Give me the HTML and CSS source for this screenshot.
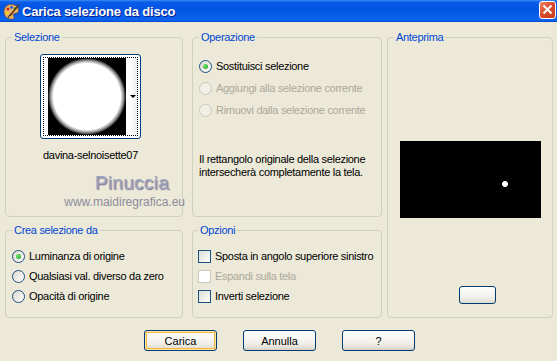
FILE: index.html
```html
<!DOCTYPE html>
<html>
<head>
  <title>Carica selezione da disco</title>
  <link rel="stylesheet" href="styles.css">
</head>
<body>
  <div class="window">
    <div class="titlebar">
      <svg class="app-icon" width="17" height="17" viewBox="0 0 17 17">
        <path d="M8 1.5c4.2 0 7.5 2.4 7.5 5.6 0 2.3-1.8 3.3-3.4 3.3-1.3 0-2 .6-2 1.6 0 1.2.9 1.5.9 2.5 0 1-1 1.6-2.6 1.6C4.3 16.1 1 13 1 8.6 1 4.6 4.2 1.5 8 1.5z" fill="#e8b46a" stroke="#8a5420" stroke-width=".8"/>
        <circle cx="5" cy="6" r="1.5" fill="#d42020"/>
        <circle cx="8.6" cy="4.4" r="1.4" fill="#2050e0"/>
        <circle cx="12" cy="5.6" r="1.3" fill="#20a030"/>
        <circle cx="4.2" cy="10" r="1.4" fill="#f0d020"/>
        <path d="M15.5 2.2L7 12.5" stroke="#5a3210" stroke-width="1.6" stroke-linecap="round"/>
        <path d="M7.4 12L5.6 14.8 4.6 15.6 5.2 13.4 6.6 11.4z" fill="#303030"/>
      </svg>
      <span class="title">Carica selezione da disco</span>
      <div class="close">
        <svg width="11" height="11" viewBox="0 0 11 11">
          <path d="M1.5 1.5L9.5 9.5M9.5 1.5L1.5 9.5" stroke="#fff" stroke-width="2"/>
        </svg>
      </div>
    </div>

    <div class="content">
      <div class="groups">
        <fieldset class="group sel">
          <legend>Selezione</legend>
          <div class="sel-body">
            <div class="thumb">
              <div class="thumb-focus">
                <div class="thumb-img"></div>
                <div class="thumb-strip"><span class="arrow"></span></div>
              </div>
            </div>
            <div class="thumb-name">davina-selnoisette07</div>
            <div class="wm-name">Pinuccia</div>
            <div class="wm-url">www.maidiregrafica.eu</div>
          </div>
        </fieldset>

        <fieldset class="group op">
          <legend>Operazione</legend>
          <div class="op-body">
            <div class="row"><span class="radio checked"></span>Sostituisci selezione</div>
            <div class="row disabled"><span class="radio"></span>Aggiungi alla selezione corrente</div>
            <div class="row disabled"><span class="radio"></span>Rimuovi dalla selezione corrente</div>
            <p class="desc">Il rettangolo originale della selezione<br>intersecherà completamente la tela.</p>
          </div>
        </fieldset>

        <fieldset class="group prev">
          <legend>Anteprima</legend>
          <div class="prev-body">
            <div class="prev-img"></div>
            <div class="prev-btn"></div>
          </div>
        </fieldset>

        <fieldset class="group crea">
          <legend>Crea selezione da</legend>
          <div class="small-body">
            <div class="row short"><span class="radio checked"></span>Luminanza di origine</div>
            <div class="row short"><span class="radio"></span>Qualsiasi val. diverso da zero</div>
            <div class="row short"><span class="radio"></span>Opacità di origine</div>
          </div>
        </fieldset>

        <fieldset class="group opz">
          <legend>Opzioni</legend>
          <div class="small-body">
            <div class="row short"><span class="check"></span>Sposta in angolo superiore sinistro</div>
            <div class="row short disabled"><span class="check"></span>Espandi sulla tela</div>
            <div class="row short"><span class="check"></span>Inverti selezione</div>
          </div>
        </fieldset>
      </div>
    </div>

    <div class="buttons">
      <button class="btn default">Carica</button>
      <button class="btn">Annulla</button>
      <button class="btn">?</button>
    </div>
  </div>
</body>
</html>
```

FILE: styles.css
```css
body {
  margin: 0;
  font-family: "Liberation Sans", Arial, sans-serif;
  font-size: 11px;
  letter-spacing: -0.3px;
  background-color: #ece9d8;
}
.window {
  width: 557px;
  height: 361px;
  background-color: #ece9d8;
  overflow: hidden;
  white-space: nowrap;
}
.titlebar {
  height: 22px;
  display: flex;
  align-items: center;
  padding-left: 3px;
  background: linear-gradient(#3a8cf8 0, #0a5ce9 2px, #0055e3 45%, #0a62ee 85%, #0860ec 93%, #003fc6 100%);
}
.app-icon {
  margin-right: 2px;
}
.title {
  flex: 1;
  color: #fff;
  font-weight: bold;
  font-size: 13px;
  letter-spacing: -0.2px;
  text-shadow: 1px 1px 0 #0a1e8c;
}
.close {
  width: 15px;
  height: 16px;
  margin: 0 1px 3px 0;
  border: 1px solid #fff;
  border-radius: 3px;
  background: linear-gradient(135deg, #ec8a6c, #dc4c2c 45%, #c83a1a);
  display: flex;
  align-items: center;
  justify-content: center;
}

.content {
  padding: 9px 4px 0 5px;
}
.groups {
  display: grid;
  grid-template-columns: 187px 195px 166px;
  grid-template-rows: 186px 94px;
  row-gap: 7px;
}
.group {
  margin: 0;
  padding: 0 6px;
  min-width: 0;
  border: 1px solid #d0d0bf;
  border-radius: 4px;
}
.group legend {
  padding: 0 2px;
  line-height: 13px;
  color: #0046d5;
}
.sel {
  grid-column: 1;
  grid-row: 1;
  width: 178px;
  box-sizing: border-box;
}
.op {
  grid-column: 2;
  grid-row: 1;
  width: 190px;
  box-sizing: border-box;
}
.prev {
  grid-column: 3;
  grid-row: 1 / 3;
}
.crea {
  grid-column: 1;
  grid-row: 2;
  width: 178px;
  box-sizing: border-box;
}
.opz {
  grid-column: 2;
  grid-row: 2;
  width: 190px;
  box-sizing: border-box;
  padding-left: 5px;
}

/* selezione */
.sel-body {
  display: flex;
  flex-direction: column;
  align-items: center;
  padding: 10px 7px 0 0;
}
.thumb {
  width: 95px;
  height: 79px;
  padding: 2px;
  border: 1px solid #003c74;
  border-radius: 3px;
  background-color: #fff;
}
.thumb-focus {
  display: flex;
  height: 77px;
  border: 1px dotted #000;
}
.thumb-img {
  width: 78px;
  height: 77px;
  margin-left: 4px;
  background: radial-gradient(closest-side, #fff 86%, #888 94%, #000 100%) #000;
}
.thumb-strip {
  flex: 1;
  display: flex;
  align-items: center;
  justify-content: flex-end;
  padding-right: 1px;
  background: linear-gradient(90deg, #fff 40%, #ececec);
}
.arrow {
  width: 0;
  height: 0;
  border-left: 3px solid transparent;
  border-right: 3px solid transparent;
  border-top: 3px solid #000;
}
.thumb-name {
  margin-top: 10px;
  line-height: 13px;
}
.wm-name {
  align-self: stretch;
  text-align: right;
  margin-top: 11px;
  font-size: 19px;
  line-height: 19px;
  letter-spacing: 0.3px;
  color: #a0a5c0;
  text-shadow: 1px 1px 1px #6e7390;
}
.wm-url {
  align-self: stretch;
  text-align: right;
  margin: 4px -16px 0 0;
  font-size: 12px;
  line-height: 12px;
  letter-spacing: 0;
  color: #8c8c9c;
}

/* radios and checks */
.row {
  display: flex;
  align-items: center;
  height: 22px;
}
.row.short {
  height: 20px;
}
.row.disabled {
  color: #aca899;
}
.radio {
  width: 11px;
  height: 11px;
  margin-right: 4px;
  border: 1px solid #1c5180;
  border-radius: 50%;
  background: linear-gradient(135deg, #dcd9ce, #fff);
  display: flex;
  align-items: center;
  justify-content: center;
}
.radio.checked::after {
  content: "";
  width: 5px;
  height: 5px;
  border-radius: 50%;
  background: radial-gradient(circle at 35% 35%, #6fe06f, #21a121);
}
.disabled .radio {
  border-color: #cac8bb;
  background: #f2f0e6;
}
.check {
  width: 11px;
  height: 11px;
  margin-right: 4px;
  border: 1px solid #1c5180;
  background: linear-gradient(135deg, #dcdcd7, #fff);
}
.disabled .check {
  border-color: #cac8bb;
  background: #fff;
}

/* operazione */
.op-body {
  padding-top: 11px;
}
.desc {
  margin: 32px 0 0 0;
  line-height: 13px;
}

/* anteprima */
.prev-body {
  display: flex;
  flex-direction: column;
  align-items: center;
}
.prev-img {
  width: 141px;
  height: 77px;
  margin-top: 97px;
  background: radial-gradient(circle at 105px 43px, #fff 2.5px, #000 3.5px);
}
.prev-btn {
  width: 35px;
  height: 16px;
  margin: 68px 0 0 15px;
  border: 1px solid #003c74;
  border-radius: 3px;
  background: linear-gradient(#fff, #f2f1ec 60%, #dedbd0);
}
.small-body {
  padding-top: 9px;
}

/* buttons */
.buttons {
  display: flex;
  justify-content: center;
  gap: 26px;
  margin-top: 12px;
  padding-left: 2px;
}
.btn {
  width: 73px;
  height: 21px;
  padding: 0;
  font-family: "Liberation Sans", Arial, sans-serif;
  font-size: 11px;
  color: #000;
  border: 1px solid #003c74;
  border-radius: 3px;
  background: linear-gradient(#fff, #f4f3ee 55%, #e6e3d8 85%, #d6d0c5);
}
.btn.default {
  box-shadow: inset 0 0 0 1px #ffe6a8, inset 0 0 0 2px #f5b640;
}
```
